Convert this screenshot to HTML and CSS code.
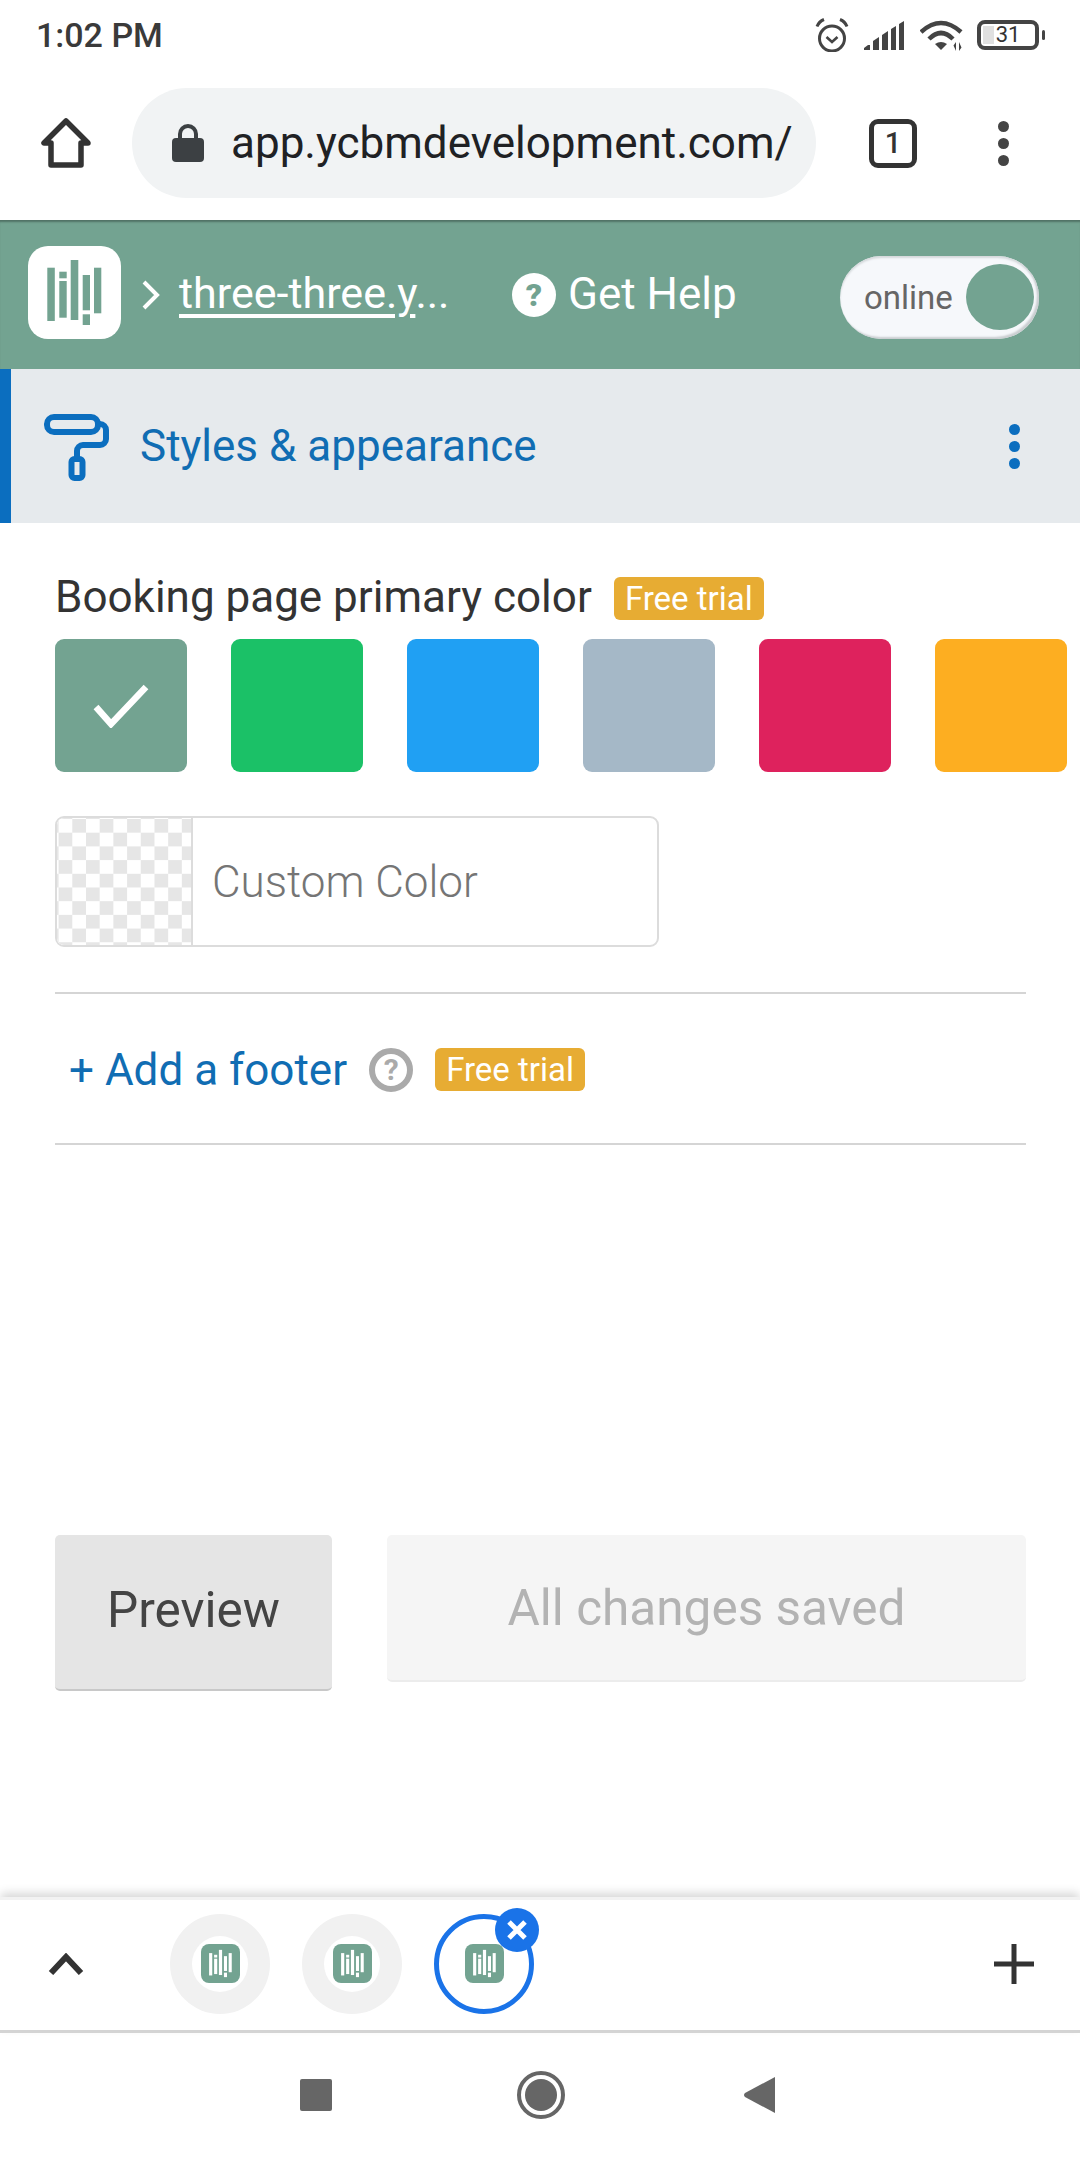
FILE: index.html
```html
<!DOCTYPE html>
<html lang="en">
<head>
<meta charset="utf-8">
<title>Styles &amp; appearance</title>
<link rel="stylesheet" href="styles.css">
</head>
<body>
<svg class="defs" width="0" height="0" aria-hidden="true">
  <symbol id="bars" viewBox="0 0 93 93">
    <rect x="19.3" y="21.7" width="7.5" height="53.3"/>
    <rect x="31.3" y="25.7" width="7.4" height="6.6"/>
    <rect x="31.3" y="35" width="7.4" height="36.7"/>
    <rect x="42.7" y="14" width="7.6" height="60"/>
    <rect x="54.7" y="29" width="7.3" height="35.3"/>
    <rect x="54.7" y="68.3" width="7.3" height="10.7"/>
    <rect x="66" y="21.7" width="7.3" height="45.6"/>
  </symbol>
</svg>
<div class="page">
  <div class="status">
    <span class="clock">1:02 PM</span>
    <div class="status-icons">
      <svg class="ic-alarm" viewBox="0 0 34 34" width="34" height="34"><circle cx="17" cy="20.5" r="12.5" fill="none" stroke="#444" stroke-width="3"/><path d="M11.5 19l5.5 5 5.500-5" fill="none" stroke="#444" stroke-width="2.600"/><path d="M2 8.500Q4 3.500 9 1.500M32 8.500Q30 3.500 25 1.500" fill="none" stroke="#444" stroke-width="3"/></svg>
      <svg class="ic-signal" viewBox="0 0 40 30" width="40" height="30"><path fill="#444" d="M0 30v-2l4-3h2v5zM9 30v-9l6-4v13zM18 30V15l6-4v19zM27 30V9l5-3v24zM35 30V4l5-3v29z"/></svg>
      <svg class="ic-wifi" viewBox="0 0 44 32" width="44" height="32"><g fill="none" stroke="#444" stroke-width="4.500"><path d="M1 13Q21-5 41 13"/><path d="M9 20Q21 8 33 20"/></g><path fill="#444" d="M15 25q6-4 12 0l-6 6z"/><path fill="#444" d="M36 32V23l-2.500 3.500zM39 23v9l2.500-3.500z"/></svg>
      <div class="battery"><span class="battery-fill"></span><span class="battery-num">31</span></div>
      <span class="battery-nub"></span>
    </div>
  </div>

  <div class="toolbar">
    <svg class="ic-home" viewBox="0 0 50 50" width="50" height="50"><path d="M25 3L3 25h7v22h30V25h7z" fill="none" stroke="#333" stroke-width="5.500" stroke-linejoin="round"/></svg>
    <div class="urlbar">
      <svg class="ic-lock" viewBox="0 0 32 38" width="32" height="38"><path d="M8 16V10a8 8 0 0 1 16 0v6" fill="none" stroke="#3c4043" stroke-width="4"/><rect y="14" width="32" height="24" rx="4" fill="#3c4043"/></svg>
      <span class="url">app.ycbmdevelopment.com/</span>
    </div>
    <div class="tabcount">1</div>
    <div class="dots dots-dark"><i></i><i></i><i></i></div>
  </div>

  <header class="appbar">
    <div class="logo"><svg width="93" height="93"><use href="#bars"/></svg></div>
    <svg class="crumb-arrow" viewBox="0 0 18 30" width="18" height="30"><path d="M2 2l13 13L2 28" fill="none" stroke="#fff" stroke-width="4"/></svg>
    <span class="crumb"><a class="crumb-link">three-three.y</a>...</span>
    <span class="help-icon">?</span>
    <span class="help-text">Get Help</span>
    <div class="toggle"><span class="toggle-label">online</span><span class="toggle-knob"></span></div>
  </header>

  <div class="section-row">
    <svg class="ic-roller" viewBox="40 408 72 74" width="72" height="74"><g fill="none" stroke="#0b6ebf" stroke-width="6"><rect x="47" y="416" width="51" height="15" rx="7"/><path d="M98 423h2a6 6 0 0 1 6 6v9a6 6 0 0 1-6 6H83a6 6 0 0 0-6 6v8"/><rect x="71.500" y="458" width="11" height="19" rx="3"/></g></svg>
    <span class="section-title">Styles &amp; appearance</span>
    <div class="dots dots-blue"><i></i><i></i><i></i></div>
  </div>

  <main class="content">
    <div class="label-row">
      <span class="label">Booking page primary color</span>
      <span class="badge">Free trial</span>
    </div>
    <div class="swatches">
      <div class="swatch sw-sage"><svg viewBox="0 0 56 44" width="56" height="44"><path d="M3 23l15 17L53 3" fill="none" stroke="#fff" stroke-width="6.500"/></svg></div>
      <div class="swatch sw-green"></div>
      <div class="swatch sw-blue"></div>
      <div class="swatch sw-grey"></div>
      <div class="swatch sw-pink"></div>
      <div class="swatch sw-orange"></div>
    </div>
    <div class="custom">
      <div class="checker"></div>
      <span class="custom-text">Custom Color</span>
    </div>
    <div class="footer-row">
      <span class="add-footer">+ Add a footer</span>
      <span class="q-icon">?</span>
      <span class="badge">Free trial</span>
    </div>
    <div class="actions">
      <div class="btn btn-preview">Preview</div>
      <div class="btn btn-saved">All changes saved</div>
    </div>
  </main>

  <div class="tabstrip">
    <svg class="ic-up" viewBox="0 0 36 22" width="36" height="22"><path d="M3 20L18 4l15 16" fill="none" stroke="#333" stroke-width="6"/></svg>
    <div class="tab tab-idle"><span class="fav-halo"><span class="fav"><svg width="39" height="39"><use href="#bars"/></svg></span></span></div>
    <div class="tab tab-idle"><span class="fav-halo"><span class="fav"><svg width="39" height="39"><use href="#bars"/></svg></span></span></div>
    <div class="tab tab-active">
      <span class="fav"><svg width="39" height="39"><use href="#bars"/></svg></span>
      <span class="tab-close"><svg viewBox="0 0 22 22" width="22" height="22"><path d="M3 3l16 16M19 3L3 19" stroke="#fff" stroke-width="5"/></svg></span>
    </div>
    <svg class="ic-plus" viewBox="0 0 40 40" width="40" height="40"><path d="M20 0v40M0 20h40" stroke="#333" stroke-width="5"/></svg>
  </div>

  <nav class="navbar">
    <span class="nav-square"></span>
    <span class="nav-circle"><span></span></span>
    <svg class="nav-back" viewBox="0 0 32 36" width="32" height="36"><path d="M32 0v36L2 20q-2-2 0-4z" fill="#666"/></svg>
  </nav>
</div>
</body>
</html>
```

FILE: styles.css
```css
* { box-sizing: border-box; }
html, body { margin: 0; padding: 0; background: #fff; }
body { font-family: Roboto, "Liberation Sans", sans-serif; color: #333; }
.defs { position: absolute; }
.page { width: 1080px; height: 2160px; display: flex; flex-direction: column; overflow: hidden; }

.status { height: 70px; display: flex; align-items: center; padding: 0 35px 0 36px; justify-content: space-between; }
.clock { font-size: 34px; font-weight: 500; color: #3a3a3a; }
.status-icons { display: flex; align-items: center; }
.ic-alarm { margin-right: 15px; }
.ic-signal { margin-right: 16px; }
.ic-wifi { margin-right: 13px; }
.battery { width: 62px; height: 30px; border: 4px solid #444; border-radius: 8px; position: relative; display: flex; align-items: center; justify-content: center; }
.battery-fill { position: absolute; left: 2px; top: 2px; bottom: 2px; width: 11px; background: #e0e0e0; }
.battery-num { position: relative; font-size: 22px; color: #333; line-height: 1; }
.battery-nub { width: 3px; height: 10px; background: #444; border-radius: 2px; margin-left: 3px; }

.toolbar { height: 150px; display: flex; align-items: center; padding-left: 41px; padding-bottom: 4px; }
.ic-home { flex: none; }
.urlbar { width: 684px; height: 110px; margin-left: 41px; border-radius: 55px; background: #f1f3f4; display: flex; align-items: center; padding-left: 40px; flex: none; }
.ic-lock { flex: none; }
.url { margin-left: 27px; font-size: 44px; color: #202124; white-space: nowrap; }
.tabcount { width: 48px; height: 49px; margin-left: 53px; border: 5px solid #333; border-radius: 9px; display: flex; align-items: center; justify-content: center; font-size: 29px; font-weight: 500; color: #333; }
.dots { display: flex; flex-direction: column; gap: 6px; }
.dots i { display: block; width: 11px; height: 11px; border-radius: 50%; }
.dots-dark { margin-left: 81px; }
.dots-dark i { background: #444; }
.dots-blue { margin-left: auto; margin-right: 60px; }
.dots-blue i { background: #0b6ebf; }

.appbar { height: 149px; background: #73a391; display: flex; align-items: center; padding-left: 28px; color: #fff; box-shadow: inset 0 3px 2px -1px rgba(0,0,0,.3); }
.logo { width: 93px; height: 93px; margin-bottom: 5px; border-radius: 20px; background: #fff; fill: #73a391; flex: none; }
.logo svg { display: block; }
.crumb-arrow { margin-left: 21px; flex: none; }
.crumb { margin-left: 19px; font-size: 43px; white-space: nowrap; width: 275px; flex: none; padding-bottom: 3px; }
.crumb-link { text-decoration: underline; text-decoration-thickness: 4px; text-underline-offset: 6px; }
.help-icon { width: 44px; height: 44px; margin-left: 58px; border-radius: 50%; background: #fff; color: #73a391; display: flex; align-items: center; justify-content: center; font-size: 32px; font-weight: 900; flex: none; }
.help-text { margin-left: 12px; font-size: 44px; white-space: nowrap; padding-bottom: 2px; }
.toggle { margin-left: auto; margin-right: 41px; margin-top: 5px; width: 199px; height: 83px; border-radius: 42px; background: #f6f8fb; box-shadow: inset -2px -2px 2px #c9cdd0, inset 0 2px 2px #d5d9dc; display: flex; align-items: center; padding: 0 5px 0 24px; justify-content: space-between; }
.toggle-label { font-size: 33px; color: #666; }
.toggle-knob { width: 68px; height: 66px; border-radius: 50%; background: #73a391; }

.section-row { height: 154px; background: #e6eaed; border-left: 11px solid #0b6ebf; display: flex; align-items: center; padding-left: 29px; }
.ic-roller { flex: none; margin-left: 0; }
.section-title { margin-left: 28px; font-size: 44px; color: #106db3; white-space: nowrap; }

.content { flex: 1; padding: 54px 54px 0 55px; display: flex; flex-direction: column; }
.label-row { height: 43px; display: flex; align-items: center; }
.label { font-size: 44px; color: #333; white-space: nowrap; padding-bottom: 3px; }
.badge { background: #e7ac33; color: #fff; font-size: 33px; height: 43px; width: 150px; border-radius: 6px; display: flex; align-items: center; justify-content: center; margin-left: 22px; white-space: nowrap; flex: none; }
.swatches { display: flex; gap: 44px; margin-top: 19px; margin-right: -41px; }
.swatch { width: 132px; height: 133px; border-radius: 9px; flex: none; display: flex; align-items: center; justify-content: center; }
.sw-sage { background: #73a391; }
.sw-green { background: #1bc167; }
.sw-blue { background: #20a0f3; }
.sw-grey { background: #a5b8c7; }
.sw-pink { background: #de225d; }
.sw-orange { background: #fdae21; }
.custom { width: 604px; height: 131px; margin-top: 44px; border: 2px solid #dcdcdc; border-radius: 9px; display: flex; align-items: stretch; overflow: hidden; }
.checker { width: 136px; flex: none; border-right: 2px solid #dcdcdc; background-color: #fff; background-image: conic-gradient(#e6e6e6 25%, #fff 0 50%, #e6e6e6 0 75%, #fff 0); background-size: 27.400px 27.400px; background-position: 1.600px 1px; }
.custom-text { align-self: center; margin-left: 19px; font-size: 44px; font-weight: 300; color: #757575; white-space: nowrap; }
.footer-row { margin-top: 45px; height: 153px; border-top: 2px solid #d5d5d5; border-bottom: 2px solid #d5d5d5; display: flex; align-items: center; padding-left: 14px; padding-top: 2px; }
.add-footer { font-size: 44px; color: #106db3; white-space: nowrap; }
.q-icon { width: 44px; height: 44px; margin-left: 22px; border: 6px solid #aaa; border-radius: 50%; color: #aaa; font-size: 30px; font-weight: 700; display: flex; align-items: center; justify-content: center; flex: none; }
.footer-row .badge { margin-left: 22px; }
.actions { margin-top: 390px; display: flex; align-items: flex-start; gap: 55px; }
.btn { border-radius: 5px; display: flex; align-items: center; justify-content: center; white-space: nowrap; }
.btn-preview { width: 277px; height: 156px; background: #e5e5e5; border-bottom: 2px solid #c8c8c8; font-size: 49.500px; color: #444; padding-bottom: 4px; }
.btn-saved { flex: 1; height: 147px; background: #f5f5f5; border-bottom: 2px solid #ececec; font-size: 49.500px; color: #b3b3b3; }

.tabstrip { height: 136px; border-top: 3px solid #f2f2f2; border-bottom: 3px solid #d4d4d4; padding-bottom: 3px; display: flex; align-items: center; position: relative; box-shadow: 0 -5px 9px -1px rgba(0,0,0,.16); background: #fff; }
.ic-up { margin-left: 48px; flex: none; }
.tab { width: 100px; height: 100px; border-radius: 50%; display: flex; align-items: center; justify-content: center; position: relative; flex: none; margin-left: 32px; }
.tab-idle { background: #f1f1f1; }
.ic-up + .tab { margin-left: 86px; }
.tab-active { border: 5px solid #1a73e8; }
.fav-halo { width: 56px; height: 56px; border-radius: 50%; background: #fff; display: flex; align-items: center; justify-content: center; }
.fav { width: 39px; height: 39px; border-radius: 8px; background: #73a391; fill: #fff; display: block; }
.fav svg { display: block; }
.tab-close { position: absolute; top: -11px; right: -10px; width: 44px; height: 44px; border-radius: 50%; background: #1a73e8; display: flex; align-items: center; justify-content: center; }
.ic-plus { margin-left: auto; margin-right: 46px; flex: none; }

.navbar { height: 127px; display: flex; align-items: center; padding-bottom: 3px; padding-left: 300px; background: #fff; }
.nav-square { width: 32px; height: 32px; background: #666; border-radius: 2px; flex: none; }
.nav-circle { width: 48px; height: 48px; margin-left: 185px; border: 4px solid #666; border-radius: 50%; background: #fff; display: flex; align-items: center; justify-content: center; flex: none; }
.nav-circle span { width: 32px; height: 32px; border-radius: 50%; background: #666; }
.nav-back { margin-left: 178px; flex: none; }
```
